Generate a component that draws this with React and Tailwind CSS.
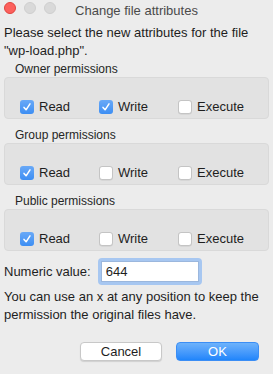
import React from "react";

const font = { fontFamily: '"Liberation Sans", Arial, sans-serif' };

const Check = ({ checked, label }) => (
  <div className="flex items-center gap-[5px]">
    {checked ? (
      <div className="w-[14px] h-[14px] rounded-[3px] bg-gradient-to-b from-[#69a9f7] to-[#3c8ef3] flex items-center justify-center">
        <svg width="10" height="10" viewBox="0 0 10 10">
          <path d="M2 5.4 L4.1 7.8 L8 1.8" fill="none" stroke="white" strokeWidth="1.5" strokeLinecap="round" strokeLinejoin="round" />
        </svg>
      </div>
    ) : (
      <div className="w-[14px] h-[14px] rounded-[3px] bg-white border border-[#c4c4c4] shadow-[0_0.5px_0.5px_rgba(0,0,0,0.1)]" />
    )}
    <span className="text-[13px] leading-[14px] text-[#1e1e1e]">{label}</span>
  </div>
);

const Section = ({ title, perms }) => (
  <>
    <div className="pl-[11px] mt-[9px] h-[15px] leading-[15px] text-[12px] text-[#262626]">{title}</div>
    <div className="h-[42px] rounded-[4px] bg-[#e2e2e2] border border-[#d9d9d9] pt-[17px] pl-[15px] grid grid-cols-[79px_79px_79px]">
      <Check checked={perms[0]} label="Read" />
      <Check checked={perms[1]} label="Write" />
      <Check checked={perms[2]} label="Execute" />
    </div>
  </>
);

export default function App() {
  return (
    <div className="w-[273px] h-[374px] bg-[#ececec] overflow-hidden text-[#1e1e1e]" style={font}>
      <div className="relative h-[22px] flex items-center">
        <div className="absolute left-[4px] top-[2px] flex gap-[8px]">
          <div className="w-[12px] h-[12px] rounded-full bg-[#fc605c] border border-[#e0443e]" />
          <div className="w-[12px] h-[12px] rounded-full bg-[#d9d9d9] border border-[#cfcfcf]" />
          <div className="w-[12px] h-[12px] rounded-full bg-[#d9d9d9] border border-[#cfcfcf]" />
        </div>
        <div className="w-full text-center text-[13px] text-[#4a4a4a]">Change file attributes</div>
      </div>
      <div className="px-[4px]">
        <p className="mt-[2px] text-[13px] leading-[18px]">
          Please select the new attributes for the file "wp-load.php".
        </p>
        <div className="-mt-[7px]" />
        <Section title="Owner permissions" perms={[true, true, false]} />
        <Section title="Group permissions" perms={[true, false, false]} />
        <Section title="Public permissions" perms={[true, false, false]} />
        <div className="mt-[7px] h-[27px] flex items-center gap-[6px]">
          <span className="text-[13px]">Numeric value:</span>
          <div className="ml-[1px] w-[104px] h-[27px] rounded-[4px] bg-[#a7c7f1] p-[3px]">
            <div className="w-full h-full bg-white border border-[#9bb7dd] text-[13px] leading-[19px] pl-[4px]">644</div>
          </div>
        </div>
        <p className="mt-[3px] text-[13px] leading-[18px]">
          You can use an x at any position to keep the permission the original files have.
        </p>
        <div className="mt-[18px] flex justify-end gap-[14px] pr-[10px]">
          <button className="w-[82px] h-[19px] rounded-[4px] bg-white border border-[#c8c8c8] shadow-[0_1px_1px_rgba(0,0,0,0.12)] text-[13px] leading-[17px] text-[#1e1e1e]">
            Cancel
          </button>
          <button className="w-[83px] h-[19px] rounded-[4px] bg-gradient-to-b from-[#6db2fb] to-[#1f85fb] border border-[#3b8ef5] text-[13px] leading-[17px] text-white">
            OK
          </button>
        </div>
      </div>
    </div>
  );
}
